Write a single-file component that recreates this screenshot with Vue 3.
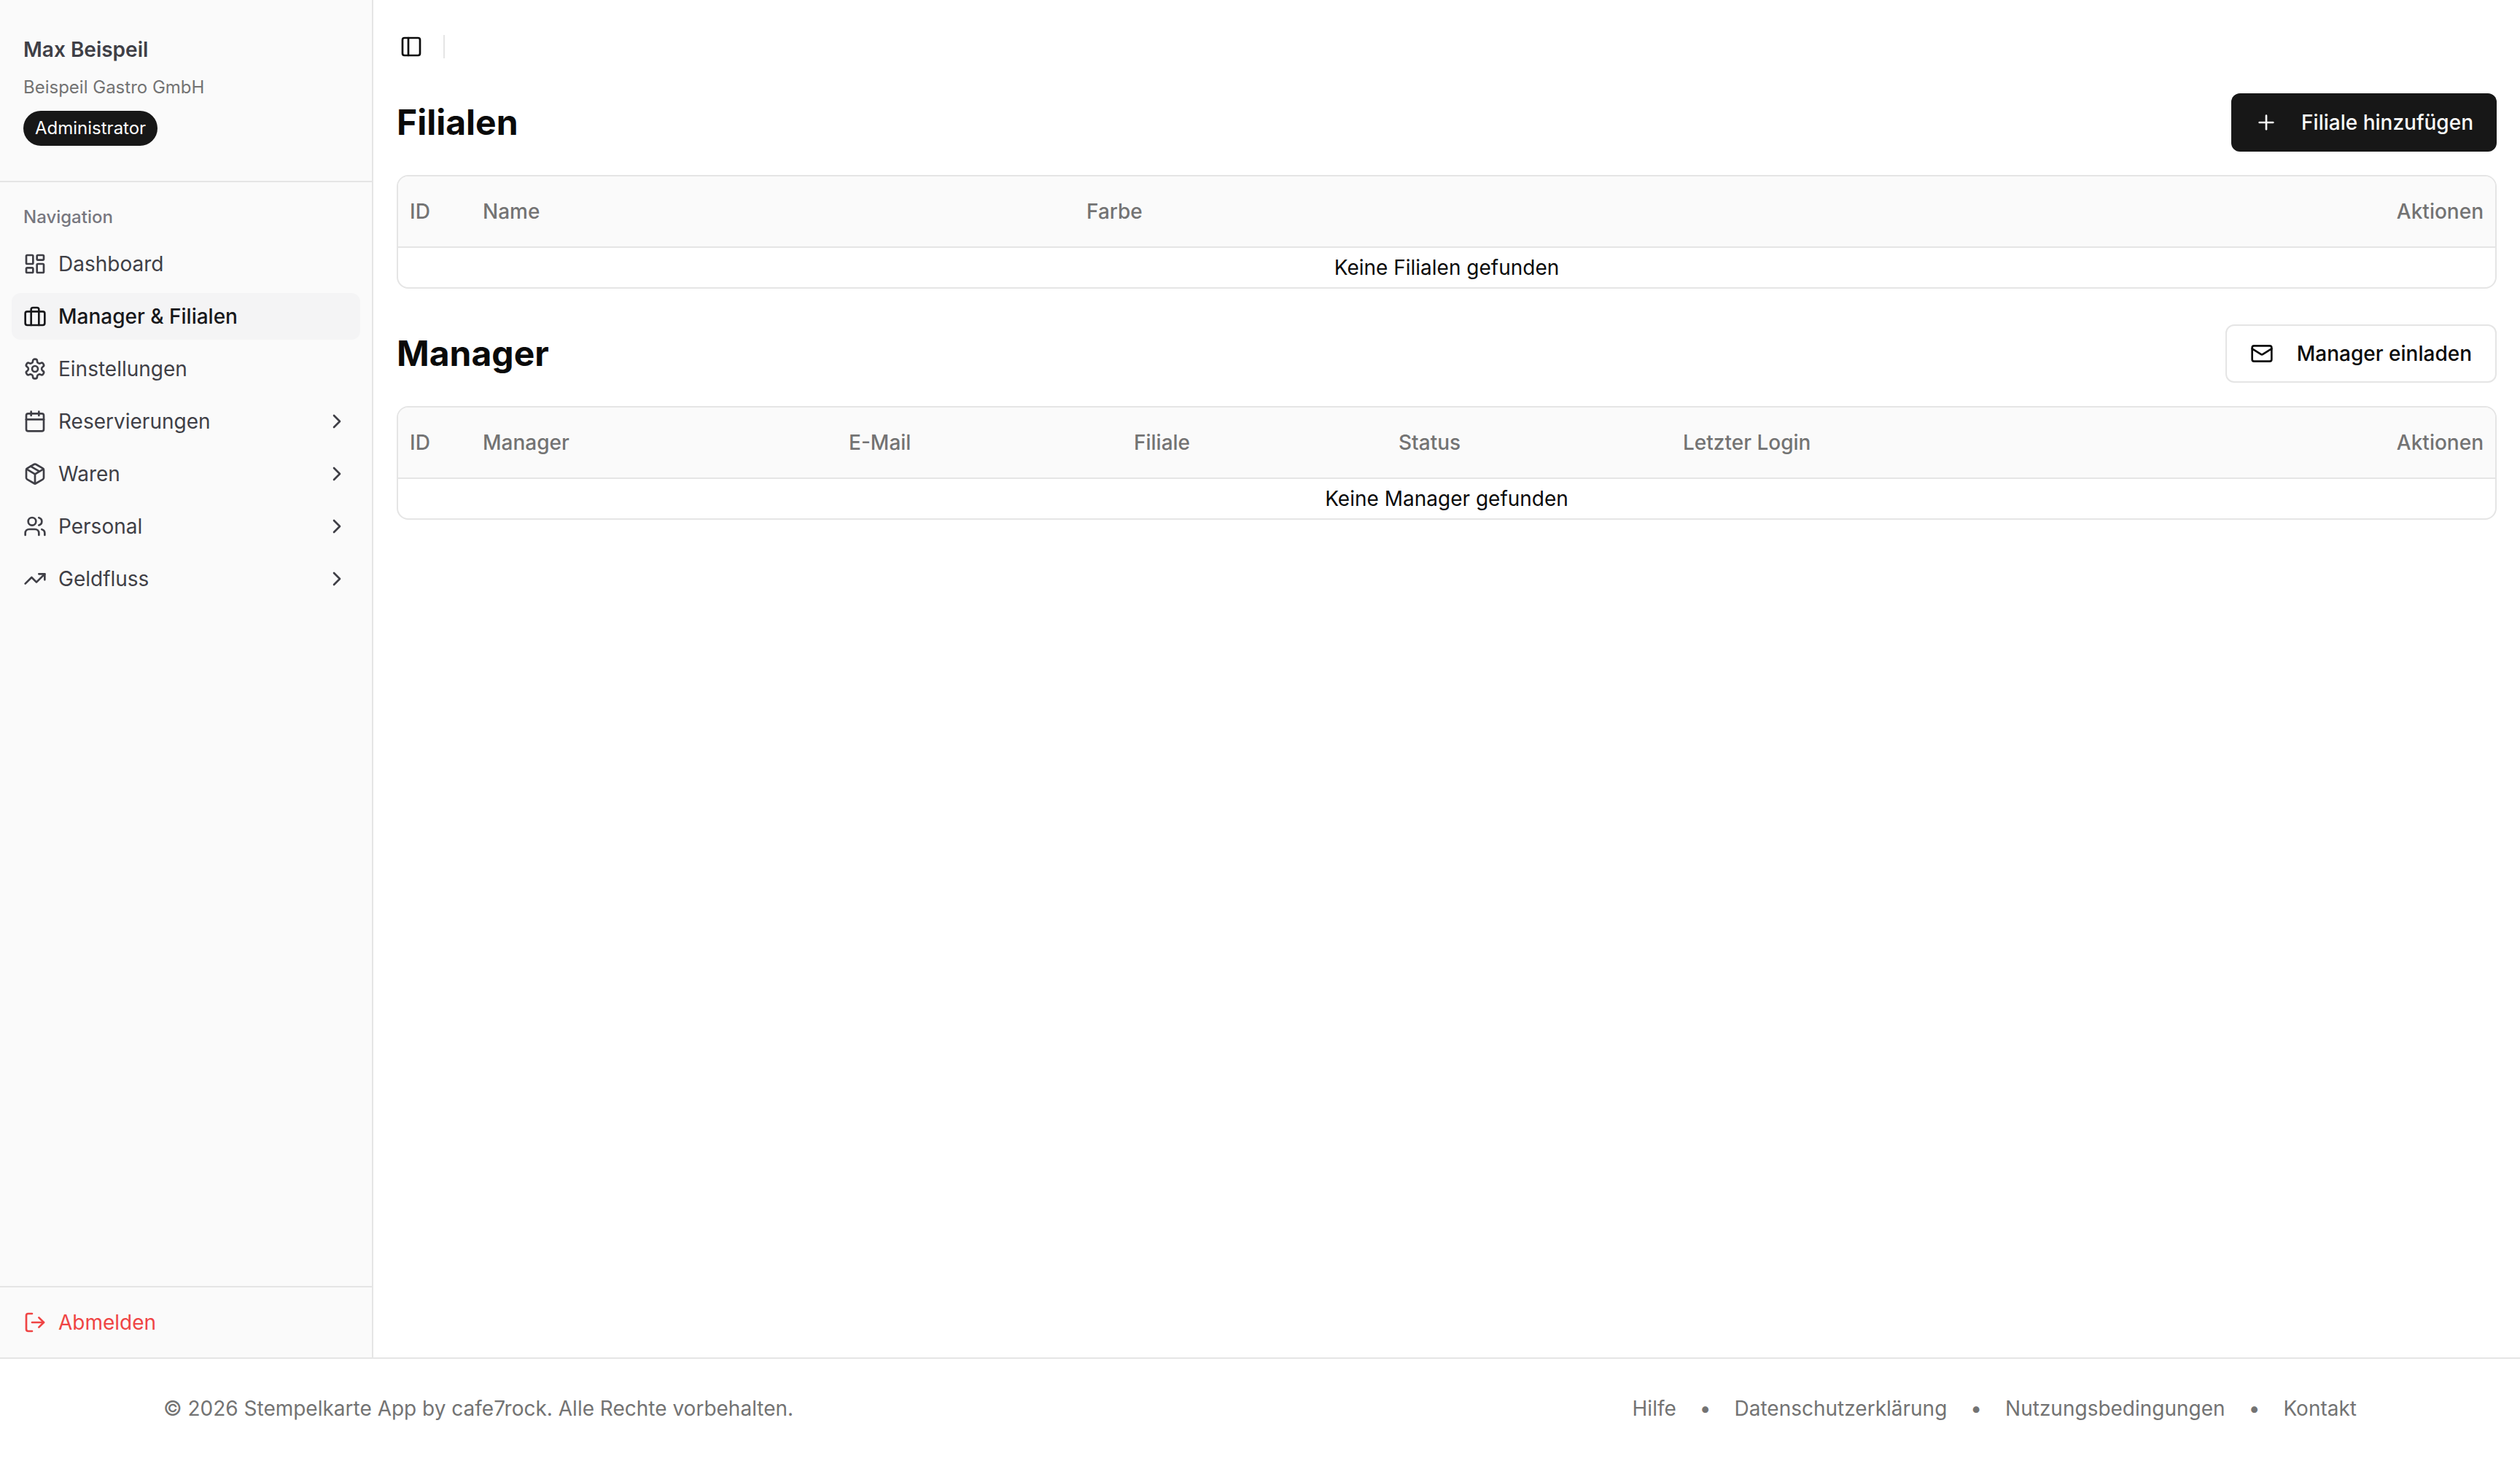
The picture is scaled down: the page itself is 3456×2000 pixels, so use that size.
<template>
  <div class="app">
    <div class="shell">
      <aside class="sidebar">
        <div class="user-box">
          <div class="user-name">Max Beispeil</div>
          <div class="user-company">Beispeil Gastro GmbH</div>
          <span class="role-badge">Administrator</span>
        </div>

        <nav class="nav">
          <div class="nav-label">Navigation</div>
          <a
            v-for="item in navItems"
            :key="item.label"
            class="nav-item"
            :class="{ active: item.active }"
          >
            <svg class="icon" viewBox="0 0 24 24" v-html="item.icon"></svg>
            <span class="nav-text">{{ item.label }}</span>
            <svg v-if="item.sub" class="icon chevron" viewBox="0 0 24 24">
              <path d="m9 18 6-6-6-6" />
            </svg>
          </a>
        </nav>

        <div class="sidebar-bottom">
          <a class="nav-item logout">
            <svg class="icon" viewBox="0 0 24 24">
              <path d="M9 21H5a2 2 0 0 1-2-2V5a2 2 0 0 1 2-2h4" />
              <polyline points="16 17 21 12 16 7" />
              <line x1="21" y1="12" x2="9" y2="12" />
            </svg>
            <span class="nav-text">Abmelden</span>
          </a>
        </div>
      </aside>

      <main class="main">
        <header class="topbar">
          <svg class="icon" viewBox="0 0 24 24">
            <rect width="18" height="18" x="3" y="3" rx="2" />
            <path d="M9 3v18" />
          </svg>
          <div class="topbar-sep"></div>
        </header>

        <section class="content">
          <div class="section-head">
            <h2>Filialen</h2>
            <button class="btn btn-primary">
              <svg class="icon" viewBox="0 0 24 24"><path d="M5 12h14" /><path d="M12 5v14" /></svg>
              Filiale hinzufügen
            </button>
          </div>
          <div class="table-wrap">
            <table>
              <colgroup>
                <col v-for="c in branchCols" :key="c.label" :style="{ width: c.width + 'px' }" />
              </colgroup>
              <thead>
                <tr>
                  <th v-for="c in branchCols" :key="c.label" :class="{ right: c.right }">{{ c.label }}</th>
                </tr>
              </thead>
              <tbody>
                <tr><td :colspan="branchCols.length">Keine Filialen gefunden</td></tr>
              </tbody>
            </table>
          </div>

          <div class="section-head second">
            <h2>Manager</h2>
            <button class="btn btn-outline">
              <svg class="icon" viewBox="0 0 24 24">
                <rect width="20" height="16" x="2" y="4" rx="2" />
                <path d="m22 7-8.97 5.7a1.94 1.94 0 0 1-2.06 0L2 7" />
              </svg>
              Manager einladen
            </button>
          </div>
          <div class="table-wrap">
            <table>
              <colgroup>
                <col v-for="c in managerCols" :key="c.label" :style="{ width: c.width + 'px' }" />
              </colgroup>
              <thead>
                <tr>
                  <th v-for="c in managerCols" :key="c.label" :class="{ right: c.right }">{{ c.label }}</th>
                </tr>
              </thead>
              <tbody>
                <tr><td :colspan="managerCols.length">Keine Manager gefunden</td></tr>
              </tbody>
            </table>
          </div>
        </section>
      </main>
    </div>

    <footer class="footer">
      <div class="footer-inner">
        <span>© 2026 Stempelkarte App by cafe7rock. Alle Rechte vorbehalten.</span>
        <div class="footer-links">
          <template v-for="(link, i) in footerLinks" :key="link">
            <span v-if="i > 0">•</span>
            <a>{{ link }}</a>
          </template>
        </div>
      </div>
    </footer>
  </div>
</template>

<script setup>
const navItems = [
  {
    label: 'Dashboard',
    icon: '<rect width="7" height="9" x="3" y="3" rx="1"/><rect width="7" height="5" x="14" y="3" rx="1"/><rect width="7" height="9" x="14" y="12" rx="1"/><rect width="7" height="5" x="3" y="16" rx="1"/>'
  },
  {
    label: 'Manager & Filialen',
    active: true,
    icon: '<rect width="20" height="14" x="2" y="7" rx="2" ry="2"/><path d="M16 21V5a2 2 0 0 0-2-2h-4a2 2 0 0 0-2 2v16"/>'
  },
  {
    label: 'Einstellungen',
    icon: '<path d="M12.22 2h-.44a2 2 0 0 0-2 2v.18a2 2 0 0 1-1 1.73l-.43.25a2 2 0 0 1-2 0l-.15-.08a2 2 0 0 0-2.73.73l-.22.38a2 2 0 0 0 .73 2.73l.15.1a2 2 0 0 1 1 1.72v.51a2 2 0 0 1-1 1.74l-.15.09a2 2 0 0 0-.73 2.73l.22.38a2 2 0 0 0 2.73.73l.15-.08a2 2 0 0 1 2 0l.43.25a2 2 0 0 1 1 1.73V20a2 2 0 0 0 2 2h.44a2 2 0 0 0 2-2v-.18a2 2 0 0 1 1-1.73l.43-.25a2 2 0 0 1 2 0l.15.08a2 2 0 0 0 2.73-.73l.22-.39a2 2 0 0 0-.73-2.73l-.15-.08a2 2 0 0 1-1-1.74v-.5a2 2 0 0 1 1-1.74l.15-.09a2 2 0 0 0 .73-2.73l-.22-.38a2 2 0 0 0-2.73-.73l-.15.08a2 2 0 0 1-2 0l-.43-.25a2 2 0 0 1-1-1.73V4a2 2 0 0 0-2-2z"/><circle cx="12" cy="12" r="3"/>'
  },
  {
    label: 'Reservierungen',
    sub: true,
    icon: '<path d="M8 2v4"/><path d="M16 2v4"/><rect width="18" height="18" x="3" y="4" rx="2"/><path d="M3 10h18"/>'
  },
  {
    label: 'Waren',
    sub: true,
    icon: '<path d="M11 21.73a2 2 0 0 0 2 0l7-4A2 2 0 0 0 21 16V8a2 2 0 0 0-1-1.73l-7-4a2 2 0 0 0-2 0l-7 4A2 2 0 0 0 3 8v8a2 2 0 0 0 1 1.73z"/><path d="M12 22V12"/><path d="m3.3 7 7.703 4.734a2 2 0 0 0 1.994 0L20.7 7"/><path d="m7.5 4.27 9 5.15"/>'
  },
  {
    label: 'Personal',
    sub: true,
    icon: '<path d="M16 21v-2a4 4 0 0 0-4-4H6a4 4 0 0 0-4 4v2"/><circle cx="9" cy="7" r="4"/><path d="M22 21v-2a4 4 0 0 0-3-3.87"/><path d="M16 3.13a4 4 0 0 1 0 7.75"/>'
  },
  {
    label: 'Geldfluss',
    sub: true,
    icon: '<polyline points="22 7 13.5 15.5 8.5 10.5 2 17"/><polyline points="16 7 22 7 22 13"/>'
  }
]

const branchCols = [
  { label: 'ID', width: 100 },
  { label: 'Name', width: 828 },
  { label: 'Farbe', width: 1500 },
  { label: 'Aktionen', width: 448, right: true }
]

const managerCols = [
  { label: 'ID', width: 100 },
  { label: 'Manager', width: 502 },
  { label: 'E-Mail', width: 391 },
  { label: 'Filiale', width: 363 },
  { label: 'Status', width: 390 },
  { label: 'Letzter Login', width: 700 },
  { label: 'Aktionen', width: 430, right: true }
]

const footerLinks = ['Hilfe', 'Datenschutzerklärung', 'Nutzungsbedingungen', 'Kontakt']
</script>

<style>
html,
body {
  margin: 0;
  background: #fff;
}
</style>

<style scoped>
.app {
  min-height: 100vh;
  display: flex;
  flex-direction: column;
  font-family: Inter, "Liberation Sans", sans-serif;
  color: #0a0a0a;
}

.shell {
  flex: 1;
  display: flex;
}

.sidebar {
  width: 512px;
  box-sizing: border-box;
  flex-shrink: 0;
  display: flex;
  flex-direction: column;
  background: #fafafa;
  border-right: 2px solid #e5e5e5;
}

.user-box {
  height: 250px;
  box-sizing: border-box;
  padding: 48px 32px 0;
  border-bottom: 2px solid #e5e5e5;
}

.user-name {
  font-size: 28px;
  line-height: 40px;
  font-weight: 600;
  color: #3f3f46;
}

.user-company {
  margin-top: 16px;
  font-size: 24px;
  line-height: 32px;
  color: #737373;
}

.role-badge {
  display: inline-block;
  margin-top: 16px;
  padding: 0 16px;
  height: 48px;
  line-height: 48px;
  border-radius: 24px;
  font-size: 24px;
  font-weight: 400;
  color: #fff;
  background: #171717;
}

.nav {
  flex: 1;
  padding: 16px;
  display: flex;
  flex-direction: column;
  gap: 8px;
}

.nav-label {
  height: 64px;
  box-sizing: border-box;
  margin-bottom: -8px;
  padding: 0 16px 2px;
  display: flex;
  align-items: center;
  font-size: 24px;
  font-weight: 500;
  color: #77777f;
}

.nav-item {
  height: 64px;
  box-sizing: border-box;
  padding: 0 16px;
  display: flex;
  align-items: center;
  gap: 16px;
  border-radius: 12px;
  font-size: 28px;
  color: #3f3f46;
}

.nav-item.active {
  background: #f4f4f5;
  color: #18181b;
  font-weight: 500;
}

.nav-text {
  flex: 1;
}

.sidebar-bottom {
  padding: 16px;
  border-top: 2px solid #e5e5e5;
}

.logout {
  color: #ef4444;
}

.icon {
  width: 32px;
  height: 32px;
  flex-shrink: 0;
  fill: none;
  stroke: currentColor;
  stroke-width: 2;
  stroke-linecap: round;
  stroke-linejoin: round;
}

.main {
  flex: 1;
  min-width: 0;
}

.topbar {
  height: 128px;
  box-sizing: border-box;
  padding: 48px 0 0 36px;
  display: flex;
  align-items: flex-start;
  gap: 28px;
}

.topbar-sep {
  width: 2px;
  height: 32px;
  background: #e5e5e5;
}

.content {
  padding: 0 32px;
}

.section-head {
  height: 80px;
  margin-bottom: 32px;
  display: flex;
  align-items: center;
  justify-content: space-between;
}

.section-head.second {
  margin-top: 49px;
}

h2 {
  margin: 0;
  font-size: 48px;
  line-height: 64px;
  font-weight: 700;
  color: #0a0a0a;
}

.btn {
  height: 80px;
  box-sizing: border-box;
  padding: 0 32px;
  display: inline-flex;
  align-items: center;
  gap: 32px;
  border-radius: 12px;
  font-family: inherit;
  font-size: 28px;
  font-weight: 500;
}

.btn-primary {
  background: #171717;
  border: 0;
  color: #fafafa;
}

.btn-outline {
  background: #fff;
  border: 2px solid #e5e5e5;
  color: #0a0a0a;
}

.table-wrap {
  border: 2px solid #e5e5e5;
  border-radius: 16px;
  overflow: hidden;
}

table {
  width: 100%;
  table-layout: fixed;
  border-collapse: separate;
  border-spacing: 0;
  font-size: 28px;
}

th {
  box-sizing: border-box;
  height: 98px;
  padding: 0 16px;
  text-align: left;
  font-weight: 500;
  color: #737373;
  background: #fafafa;
  border-bottom: 2px solid #e5e5e5;
}

th.right {
  text-align: right;
}

td {
  box-sizing: border-box;
  height: 54px;
  padding: 0 16px;
  text-align: center;
  color: #0a0a0a;
}

.footer {
  height: 138px;
  box-sizing: border-box;
  border-top: 2px solid #e5e5e5;
}

.footer-inner {
  max-width: 3008px;
  height: 100%;
  margin: 0 auto;
  display: flex;
  align-items: center;
  justify-content: space-between;
  font-size: 28px;
  color: #737373;
}

.footer-links {
  display: flex;
  gap: 32px;
}
</style>
